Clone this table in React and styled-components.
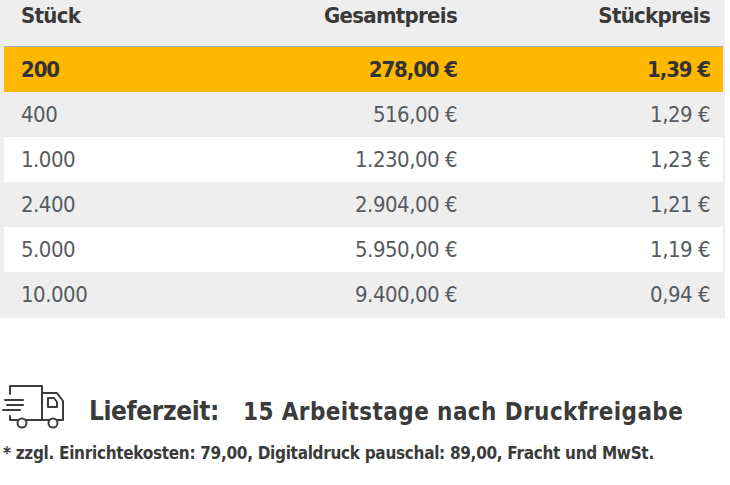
import React from 'react'
import styled, { createGlobalStyle } from 'styled-components'

const GlobalStyle = createGlobalStyle`
    body {
        margin: 0;
        background: #ffffff;
        font-family: "DejaVu Sans Condensed", "DejaVu Sans", sans-serif;
        color: #3b3b3b;
    }
`

const rows = [
    { qty: '200', total: '278,00 €', unit: '1,39 €', active: true },
    { qty: '400', total: '516,00 €', unit: '1,29 €' },
    { qty: '1.000', total: '1.230,00 €', unit: '1,23 €' },
    { qty: '2.400', total: '2.904,00 €', unit: '1,21 €' },
    { qty: '5.000', total: '5.950,00 €', unit: '1,19 €' },
    { qty: '10.000', total: '9.400,00 €', unit: '0,94 €' },
]

export default function App() {
    return (
        <Page>
            <GlobalStyle />
            <PriceTable>
                <HeadRow>
                    <Cell>Stück</Cell>
                    <Cell $right>Gesamtpreis</Cell>
                    <Cell $right>Stückpreis</Cell>
                </HeadRow>
                {rows.map((r, i) => (
                    <Row key={r.qty} $active={r.active} $white={i % 2 === 0 && !r.active}>
                        <Cell>{r.qty}</Cell>
                        <Cell $right>{r.total}</Cell>
                        <Cell $right>{r.unit}</Cell>
                    </Row>
                ))}
            </PriceTable>

            <Delivery>
                <TruckIcon />
                <DeliveryText>
                    <DeliveryLabel>Lieferzeit:</DeliveryLabel>
                    <DeliveryValue>15 Arbeitstage nach Druckfreigabe</DeliveryValue>
                </DeliveryText>
            </Delivery>
            <Footnote>* zzgl. Einrichtekosten: 79,00, Digitaldruck pauschal: 89,00, Fracht und MwSt.</Footnote>
        </Page>
    )
}

function TruckIcon() {
    return (
        <svg width="70" height="50" viewBox="0 0 70 50" fill="none" stroke="#3d3d3d" strokeWidth="2" strokeLinecap="round" strokeLinejoin="round">
            <path d="M10 14 V6 H42 V40" />
            <path d="M5 20 H23" />
            <path d="M7 25 H23" />
            <path d="M3 30 H20" />
            <path d="M10 36 V40 H17.5" />
            <circle cx="22" cy="43" r="4.5" />
            <path d="M26.5 40 H48.5" />
            <circle cx="53" cy="43" r="4.5" />
            <path d="M42 13 H57 L63 21 V40 H57.5" />
            <path d="M48 18 H54 L57 22 V27 H48 Z" />
        </svg>
    )
}

const Page = styled.div`
    width: 730px;
`

const PriceTable = styled.div`
    width: 725px;
    background: #eeeeee;
    padding: 0 2px 1px 4px;
    box-sizing: border-box;
`

const Row = styled.div`
    display: grid;
    grid-template-columns: 1fr 227px 253px;
    align-items: center;
    height: 45px;
    padding: 0 13px 0 17px;
    font-size: 22px;
    font-weight: ${(p) => (p.$active ? 700 : 400)};
    letter-spacing: ${(p) => (p.$active ? '-1.1px' : '-0.5px')};
    color: ${(p) => (p.$active ? '#333333' : '#565a61')};
    background: ${(p) => (p.$active ? '#ffb800' : p.$white ? '#ffffff' : 'transparent')};
`

const HeadRow = styled(Row)`
    box-sizing: border-box;
    height: 47px;
    align-items: start;
    padding-top: 3px;
    line-height: 26px;
    font-size: 22px;
    font-weight: 700;
    letter-spacing: -0.7px;
    color: #3a3a3a;
    background: transparent;
    border-bottom: 1px solid #a3acba;
`

const Cell = styled.div`
    text-align: ${(p) => (p.$right ? 'right' : 'left')};
    white-space: nowrap;
`

const Delivery = styled.div`
    display: flex;
    align-items: center;
    margin-top: 62px;
    height: 50px;
`

const DeliveryText = styled.div`
    display: flex;
    align-items: baseline;
    gap: 24px;
    margin-left: 19px;
    padding-top: 12px;
    white-space: nowrap;
    color: #3b3b3b;
    font-weight: 700;
`

const DeliveryLabel = styled.span`
    font-size: 26px;
    letter-spacing: -0.4px;
`

const DeliveryValue = styled.span`
    font-size: 24px;
    letter-spacing: 0.4px;
`

const Footnote = styled.div`
    margin: 12px 0 0 3px;
    font-size: 17px;
    line-height: 22px;
    font-weight: 700;
    letter-spacing: -0.3px;
    color: #3b3b3b;
    white-space: nowrap;
`
